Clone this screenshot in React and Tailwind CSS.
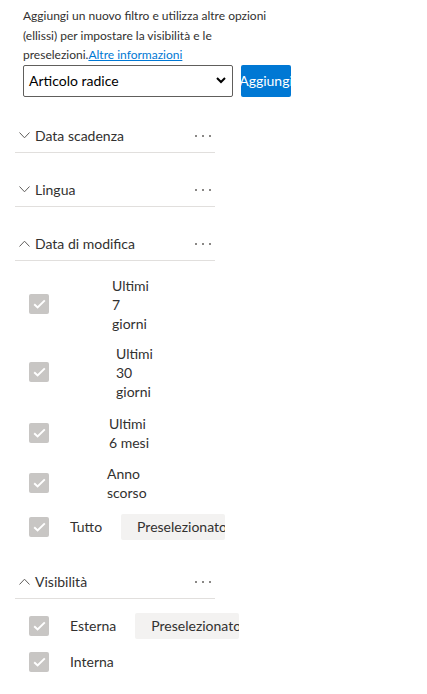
import React from "react";

const font = { fontFamily: '"Segoe UI", Lato, "Open Sans", sans-serif' };

function Chevron({ up }) {
  return (
    <svg width="11" height="7" viewBox="0 0 11 7" className="shrink-0">
      <path
        d={up ? "M0.5 6.5 L5.5 1.2 L10.5 6.5" : "M0.5 0.5 L5.5 5.8 L10.5 0.5"}
        fill="none"
        stroke="#605e5c"
        strokeWidth="1"
      />
    </svg>
  );
}

function Dots() {
  return (
    <div className="flex items-center gap-[5px] mr-[4px]">
      <span className="w-[2px] h-[2px] bg-[#8a8886]" />
      <span className="w-[2px] h-[2px] bg-[#8a8886]" />
      <span className="w-[2px] h-[2px] bg-[#8a8886]" />
    </div>
  );
}

function Header({ title, up, className = "" }) {
  return (
    <div className={"w-[200px] h-[33px] border-b border-[#e1dfdd] flex items-center " + className}>
      <div className="ml-[4px] w-[16px] flex">
        <Chevron up={up} />
      </div>
      <span className="text-[14px] text-[#323130] flex-1">{title}</span>
      <Dots />
    </div>
  );
}

function Check() {
  return (
    <div className="w-[20px] h-[20px] rounded-[2px] bg-[#c8c6c4] flex items-center justify-center shrink-0">
      <svg width="13" height="10" viewBox="0 0 13 10">
        <path d="M1.2 5.2 L4.6 8.4 L11.8 1.4" fill="none" stroke="#ffffff" strokeWidth="2" />
      </svg>
    </div>
  );
}

function Row({ lines, ml, preset, className = "" }) {
  return (
    <div className={"flex items-center ml-[29px] " + className}>
      <Check />
      <div className="text-[14px] leading-[19px] text-[#323130] whitespace-nowrap" style={{ marginLeft: ml }}>
        {lines.map((l, i) => (
          <div key={i}>{l}</div>
        ))}
      </div>
      {preset && (
        <div className="ml-[19px] w-[104px] h-[26px] bg-[#f3f2f1] rounded-[2px] overflow-hidden whitespace-nowrap pl-[16px] flex items-center text-[14px] text-[#323130]">
          Preselezionato
        </div>
      )}
    </div>
  );
}

export default function App() {
  return (
    <div className="w-[427px] h-[694px] bg-white overflow-hidden" style={font}>
      <div className="pl-[23px] pt-[6px] text-[12px] leading-[19.5px] text-[#323130] whitespace-nowrap">
        Aggiungi un nuovo filtro e utilizza altre opzioni
        <br />
        (ellissi) per impostare la visibilità e le
        <br />
        preselezioni.<span className="text-[#0078d4] underline">Altre informazioni</span>
      </div>
      <div className="flex items-center ml-[23px] mt-[0px]">
        <div className="w-[210px] h-[32px] border border-[#605e5c] rounded-[2px] flex items-center pl-[5px] pr-[6px]">
          <span className="flex-1 text-[14px] text-black">Articolo radice</span>
          <svg width="10" height="7" viewBox="0 0 10 7">
            <path d="M1 1 L5 5 L9 1" fill="none" stroke="#000" strokeWidth="2" />
          </svg>
        </div>
        <div className="ml-[8px] w-[50px] h-[32px] bg-[#0078d4] rounded-[2px] overflow-hidden flex items-center justify-center text-white text-[14px] whitespace-nowrap">
          Aggiungi
        </div>
      </div>

      <div className="ml-[15px]">
        <Header title="Data scadenza" className="mt-[23px]" />
        <Header title="Lingua" className="mt-[21px]" />
        <Header title="Data di modifica" up className="mt-[21px]" />
      </div>

      <Row lines={["Ultimi", "7", "giorni"]} ml={63} className="mt-[15px]" />
      <Row lines={["Ultimi", "30", "giorni"]} ml={67} className="mt-[11px]" />
      <Row lines={["Ultimi", "6 mesi"]} ml={60} className="mt-[13px]" />
      <Row lines={["Anno", "scorso"]} ml={58} className="mt-[12px]" />
      <Row lines={["Tutto"]} ml={21} preset className="mt-[12px]" />

      <div className="ml-[15px]">
        <Header title="Visibilità" up className="mt-[26px]" />
      </div>
      <Row lines={["Esterna"]} ml={21} preset className="mt-[14px]" />
      <Row lines={["Interna"]} ml={21} className="mt-[13px]" />
    </div>
  );
}
